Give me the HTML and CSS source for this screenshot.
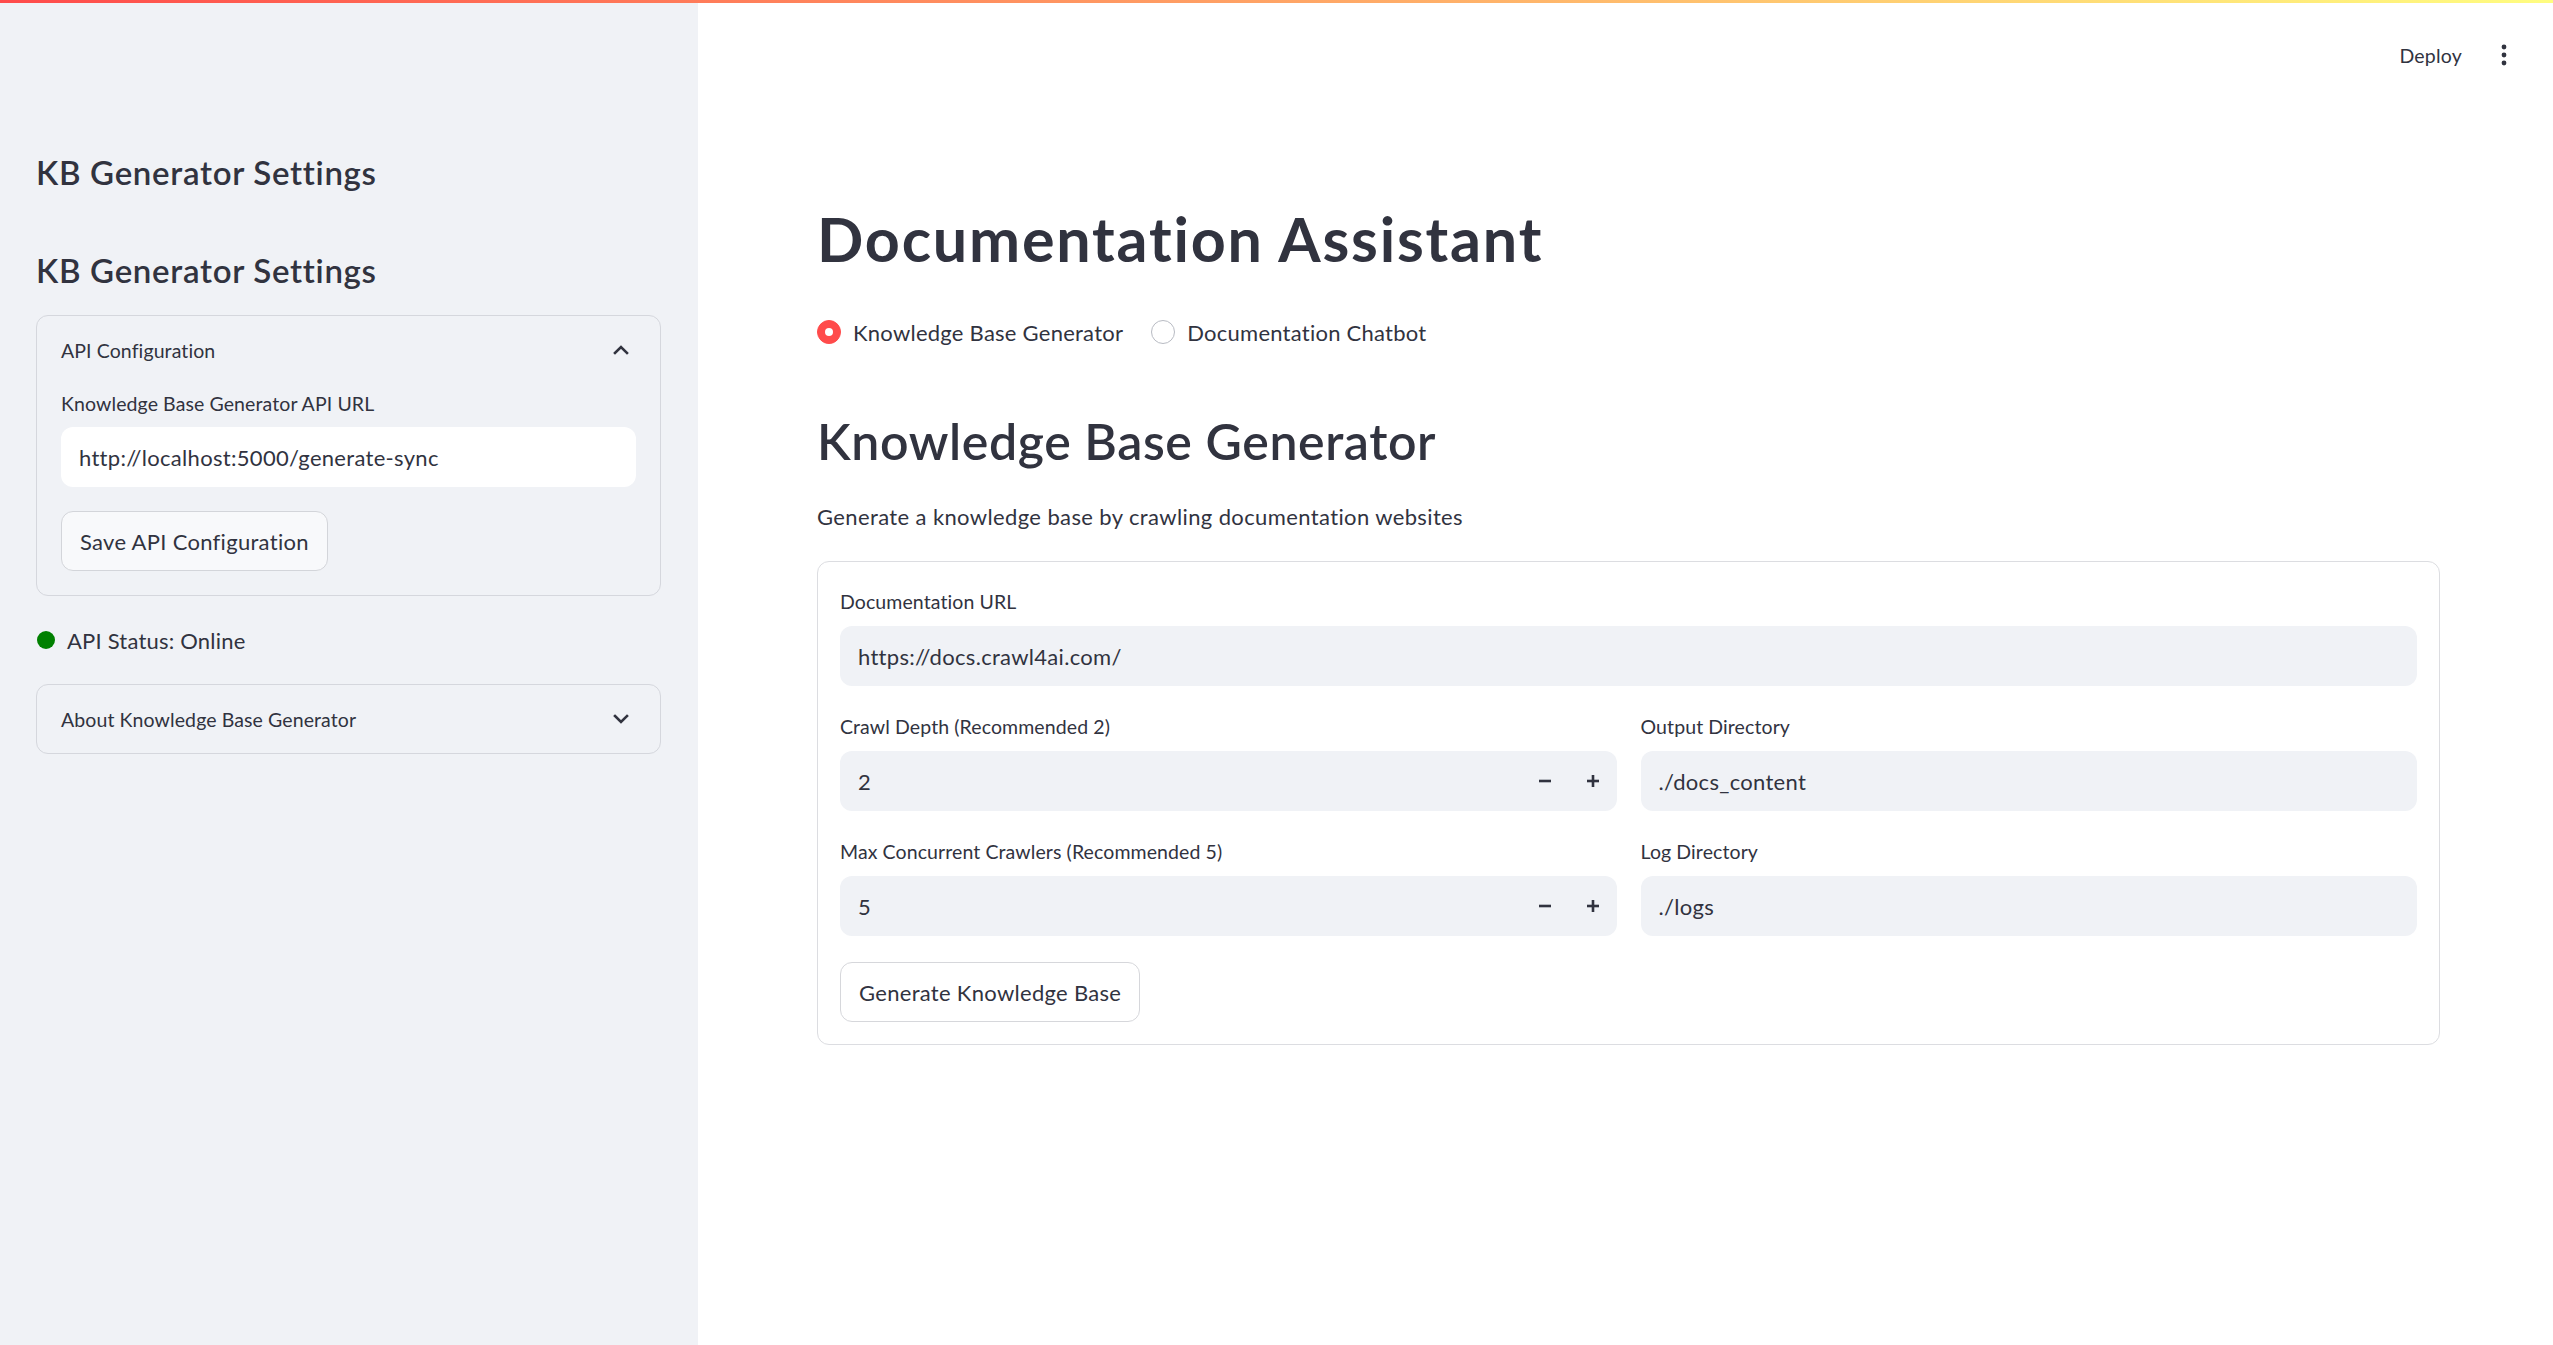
FILE: index.html
```html
<!DOCTYPE html>
<html lang="en">
<head>
<meta charset="utf-8">
<title>Documentation Assistant</title>
<link rel="stylesheet" href="styles.css">
</head>
<body>
<div class="decoration"></div>
<div class="app">
  <aside class="sidebar">
    <h2 class="side-title">KB Generator Settings</h2>
    <h2 class="side-title second">KB Generator Settings</h2>
    <div class="expander open">
      <div class="exp-summary">
        <span>API Configuration</span>
        <svg class="chev" viewBox="0 0 20 20" width="20" height="20"><polyline points="4,13 10,7 16,13"/></svg>
      </div>
      <div class="exp-body">
        <div class="wlabel">Knowledge Base Generator API URL</div>
        <div class="field white">http://localhost:5000/generate-sync</div>
        <button class="btn side-btn">Save API Configuration</button>
      </div>
    </div>
    <div class="status"><span class="dot"></span><span>API Status: Online</span></div>
    <div class="expander closed">
      <div class="exp-summary">
        <span>About Knowledge Base Generator</span>
        <svg class="chev" viewBox="0 0 20 20" width="20" height="20"><polyline points="4,7 10,13 16,7"/></svg>
      </div>
    </div>
  </aside>
  <main class="main">
    <header class="topbar">
      <span class="deploy">Deploy</span>
      <span class="menu"><svg viewBox="0 0 24 24" width="24" height="24"><circle cx="12" cy="4" r="2.4"/><circle cx="12" cy="12" r="2.4"/><circle cx="12" cy="20" r="2.4"/></svg></span>
    </header>
    <section class="block">
      <h1 class="title">Documentation Assistant</h1>
      <div class="radio-group">
        <div class="radio checked"><span class="rc"><span class="rc-in"></span></span><span>Knowledge Base Generator</span></div>
        <div class="radio"><span class="rc"></span><span>Documentation Chatbot</span></div>
      </div>
      <h2 class="subtitle">Knowledge Base Generator</h2>
      <p class="lead">Generate a knowledge base by crawling documentation websites</p>
      <div class="form">
        <div class="widget">
          <div class="wlabel">Documentation URL</div>
          <div class="field">https://docs.crawl4ai.com/</div>
        </div>
        <div class="row">
          <div class="widget">
            <div class="wlabel">Crawl Depth (Recommended 2)</div>
            <div class="field num">
              <span class="num-val">2</span>
              <span class="step"><svg viewBox="0 0 14 14" width="14" height="14"><rect x="1" y="5.7" width="12" height="2.6"/></svg></span>
              <span class="step"><svg viewBox="0 0 14 14" width="14" height="14"><rect x="1" y="5.7" width="12" height="2.6"/><rect x="5.7" y="1" width="2.6" height="12"/></svg></span>
            </div>
          </div>
          <div class="widget">
            <div class="wlabel">Output Directory</div>
            <div class="field">./docs_content</div>
          </div>
        </div>
        <div class="row">
          <div class="widget">
            <div class="wlabel">Max Concurrent Crawlers (Recommended 5)</div>
            <div class="field num">
              <span class="num-val">5</span>
              <span class="step"><svg viewBox="0 0 14 14" width="14" height="14"><rect x="1" y="5.7" width="12" height="2.6"/></svg></span>
              <span class="step"><svg viewBox="0 0 14 14" width="14" height="14"><rect x="1" y="5.7" width="12" height="2.6"/><rect x="5.7" y="1" width="2.6" height="12"/></svg></span>
            </div>
          </div>
          <div class="widget">
            <div class="wlabel">Log Directory</div>
            <div class="field">./logs</div>
          </div>
        </div>
        <button class="btn">Generate Knowledge Base</button>
      </div>
    </section>
  </main>
</div>
</body>
</html>
```
FILE: styles.css
```css
* { box-sizing: border-box; }
html, body { margin: 0; padding: 0; }
body {
  font-family: "Lato", "Noto Sans", sans-serif;
  color: #31333f;
  background: #ffffff;
  width: 2553px;
  height: 1345px;
  overflow: hidden;
}
.decoration {
  position: fixed;
  top: 0; left: 0; right: 0;
  height: 3px;
  background: linear-gradient(90deg, #ff4b4b, #fffd80);
  z-index: 10;
}
.app { display: flex; height: 1345px; }

/* Sidebar */
.sidebar {
  width: 698px;
  flex: none;
  background: #f0f2f6;
  padding: 152px 37px 0 36px;
  display: flex;
  flex-direction: column;
}
.side-title {
  margin: 0;
  font-size: 33px;
  font-weight: 600;
  line-height: 40px;
  letter-spacing: 0.7px;
}
.side-title.second { margin-top: 58px; }
.expander {
  border: 1px solid #d5d7dd;
  border-radius: 12px;
}
.expander.open { margin-top: 25px; }
.expander.closed { margin-top: 26px; }
.exp-summary {
  height: 68px;
  display: flex;
  align-items: center;
  justify-content: space-between;
  padding: 0 29px 0 24px;
  font-size: 19.5px;
  letter-spacing: 0.1px;
}
.chev polyline {
  fill: none;
  stroke: #31333f;
  stroke-width: 2.6;
  stroke-linecap: square;
}
.exp-body {
  padding: 5px 24px 24px;
  display: flex;
  flex-direction: column;
  align-items: flex-start;
}
.exp-body .field { align-self: stretch; }
.status {
  margin-top: 26px;
  height: 36px;
  display: flex;
  align-items: center;
  gap: 12px;
  font-size: 22px;
  letter-spacing: 0.2px;
  padding-left: 1px;
}
.dot {
  width: 18px; height: 18px;
  border-radius: 50%;
  background: #008000;
}

/* Widgets */
.wlabel {
  font-size: 19.5px;
  line-height: 30px;
  height: 30px;
  margin-bottom: 9px;
  letter-spacing: 0.1px;
}
.exp-body .wlabel { margin-bottom: 8px; }
.field {
  height: 60px;
  background: #f0f2f6;
  border-radius: 12px;
  padding: 0 18px;
  display: flex;
  align-items: center;
  font-size: 22px;
  letter-spacing: 0.3px;
}
.field.white { background: #ffffff; }
.field.num { padding-right: 0; }
.num-val { flex: 1; }
.step {
  width: 48px;
  height: 60px;
  display: flex;
  align-items: center;
  justify-content: center;
}
.step svg { fill: #31333f; }
.btn {
  height: 60px;
  padding: 0 18px;
  border: 1px solid #d6d7db;
  border-radius: 12px;
  background: #ffffff;
  font-family: inherit;
  font-size: 22px;
  letter-spacing: 0.3px;
  color: #31333f;
  align-self: flex-start;
}
.side-btn {
  margin-top: 24px;
  background: #f8f9fb;
  border-color: #d3d5da;
}

/* Main */
.main {
  flex: 1;
  display: flex;
  flex-direction: column;
  min-width: 0;
}
.topbar {
  height: 110px;
  display: flex;
  justify-content: flex-end;
  align-items: center;
  gap: 18px;
  padding-right: 25px;
}
.deploy { font-size: 19.5px; letter-spacing: 0.2px; }
.menu {
  width: 48px; height: 48px;
  display: flex; align-items: center; justify-content: center;
}
.menu svg { fill: #31333f; }
.block {
  padding: 92px 113px 0 119px;
  display: flex;
  flex-direction: column;
}
.title {
  margin: 0;
  font-size: 61px;
  font-weight: 700;
  line-height: 73px;
  letter-spacing: 1.8px;
}
.radio-group {
  margin-top: 39px;
  height: 36px;
  display: flex;
  align-items: center;
  gap: 28px;
  font-size: 22px;
  letter-spacing: 0.25px;
}
.radio { display: flex; align-items: center; gap: 12px; }
.rc {
  width: 24px; height: 24px;
  border-radius: 50%;
  border: 1.5px solid #b8bbc3;
  background: #fff;
  display: flex; align-items: center; justify-content: center;
}
.radio.checked .rc { background: #ff4b4b; border-color: #ff4b4b; }
.rc-in { width: 8px; height: 8px; border-radius: 50%; background: #fff; }
.subtitle {
  margin: 61px 0 0;
  font-size: 50px;
  font-weight: 600;
  line-height: 60px;
  letter-spacing: 0.6px;
}
.lead {
  margin: 28px 0 0;
  font-size: 22px;
  line-height: 36px;
  letter-spacing: 0.38px;
}
.form {
  margin-top: 26px;
  border: 1px solid #dcdde1;
  border-radius: 12px;
  padding: 25px 22px 22px;
  display: flex;
  flex-direction: column;
  gap: 26px;
}
.row {
  display: grid;
  grid-template-columns: 1fr 1fr;
  column-gap: 24px;
}
```
